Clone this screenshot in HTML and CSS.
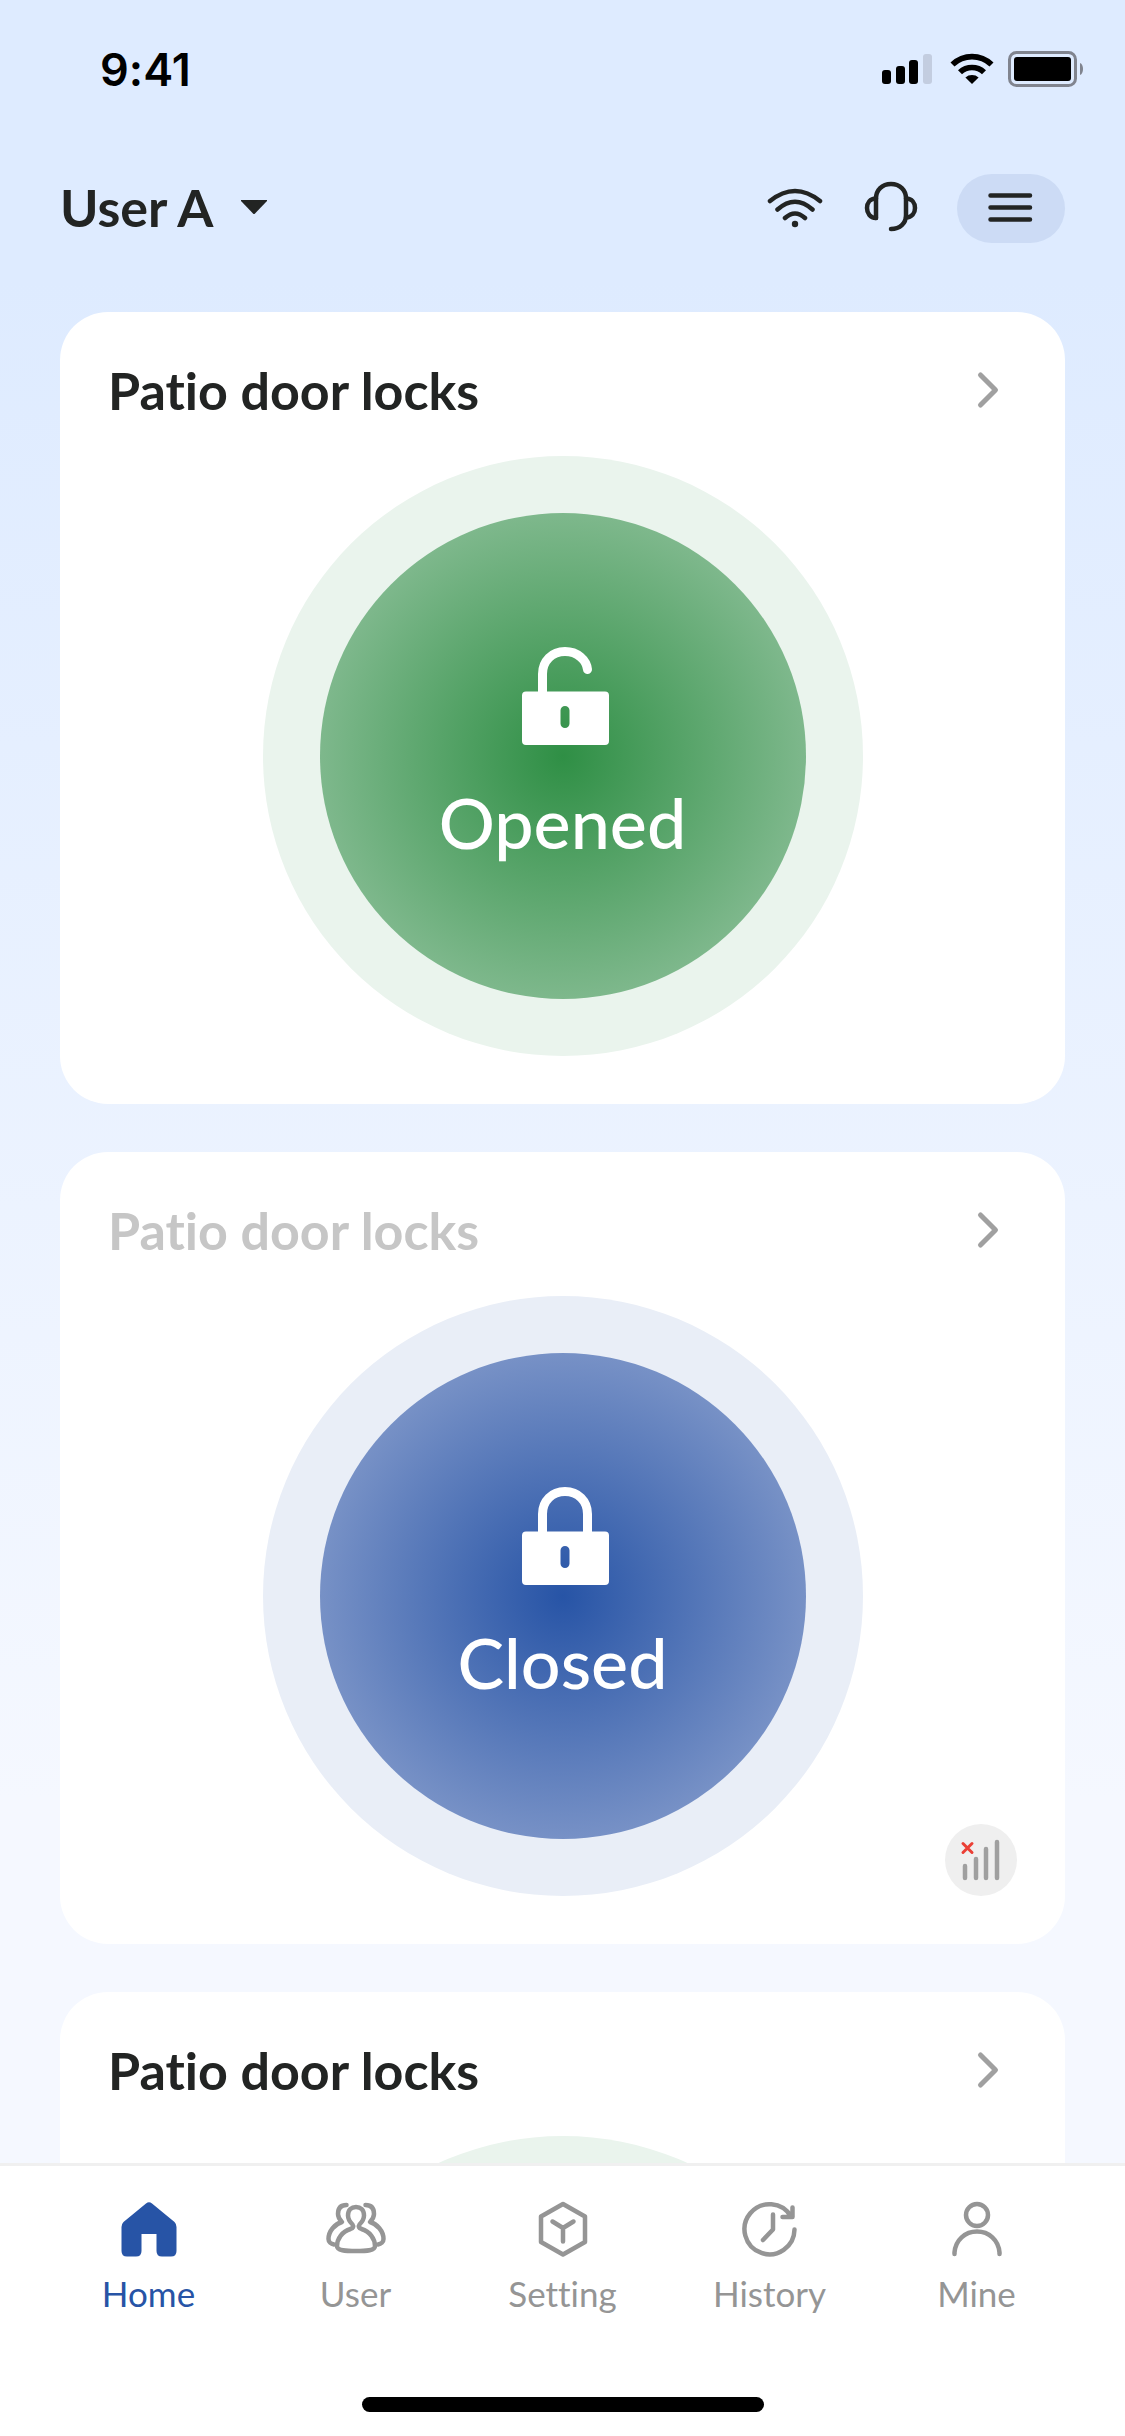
FILE: index.html
```html
<!DOCTYPE html>
<html lang="en">
<head>
  <meta charset="UTF-8">
  <meta name="viewport" content="width=device-width, initial-scale=1">
  <title>Door Locks</title>
  <link rel="stylesheet" href="styles.css">
</head>
<body>

  <div class="status-bar">
    <div class="time">9:41</div>
    <div class="status-icons">
      <svg width="54" height="36" viewBox="0 0 54 36">
        <rect x="0" y="19" width="9" height="14" rx="3"/>
        <rect x="14" y="15" width="9" height="18" rx="3"/>
        <rect x="27" y="9" width="9" height="24" rx="3"/>
        <rect x="41" y="3" width="9" height="30" rx="3" fill="#c3cde0"/>
      </svg>
      <svg width="44" height="36" viewBox="0 0 44 36">
        <path d="M0.5 11.5A31 31 0 0 1 43.5 11.5L39.5 15.5A25.5 25.5 0 0 0 4.5 15.5Z"/>
        <path d="M8 19.2A20.5 20.5 0 0 1 36 19.2L32 23.2A14.6 14.6 0 0 0 12 23.2Z"/>
        <path d="M15.4 26.6A10 10 0 0 1 28.6 26.6L22 33Z"/>
      </svg>
      <svg width="75" height="36" viewBox="0 0 75 36">
        <rect x="1.5" y="1.5" width="66" height="33" rx="7" fill="none" stroke="#80848f" stroke-width="3"/>
        <rect x="6" y="6" width="57" height="24" rx="3"/>
        <path d="M72 12C76 13 76 23 72 24Z" fill="#80848f"/>
      </svg>
    </div>
  </div>

  <header class="header">
    <button class="user-switch">
      User A
      <svg width="26" height="14" viewBox="0 0 26 14"><path d="M0 0H26V1L14 13.4Q13 14.4 12 13.4L0 1Z" fill="#222423"/></svg>
    </button>
    <div class="actions">
      <button class="icon-btn" aria-label="Wi-Fi">
        <svg width="60" height="60" viewBox="0 0 60 60" fill="none" stroke="#222423" stroke-width="4.5" stroke-linecap="round">
          <path d="M5 22Q30 2 55 22M12.5 30.5Q30 15 47.5 30.5M20 39Q30 30 40 39"/>
          <circle cx="30" cy="45" r="3.2" fill="#222423" stroke="none"/>
        </svg>
      </button>
      <button class="icon-btn" aria-label="Support">
        <svg width="60" height="60" viewBox="0 0 60 60" fill="none" stroke="#222423" stroke-width="4.5" stroke-linecap="round" stroke-linejoin="round">
          <path d="M15 39V19.5C15 11 21 5 30 5S45 11 45 19.5V36C45 44.5 39 50 30 50"/>
          <path d="M15 19.5C9 19.5 6 24 6 29S9 39 15 39M45 19.5C51 19.5 54 24 54 29S51 38.5 45 38.5"/>
        </svg>
      </button>
      <button class="menu-btn" aria-label="Menu">
        <svg width="60" height="60" viewBox="0 0 60 60" fill="none" stroke="#222423" stroke-width="4.5" stroke-linecap="round">
          <path d="M9.5 16.5H49M9.5 28.5H49M9.5 40.5H49"/>
        </svg>
      </button>
    </div>
  </header>

  <main class="locks">
    <section class="card">
      <div class="card-header">
        <h2>Patio door locks</h2>
        <a href="#" aria-label="Open details">
          <svg width="60" height="60" viewBox="0 0 60 60"><path d="M23.5 15L38.5 30L23.5 45"/></svg>
        </a>
      </div>
      <button class="dial opened">
        <span class="dial-inner">
          <svg width="93" height="99" viewBox="-6 0 93 99">
            <path d="M20.500 46V27C20.500 14 30 4.500 43 4.500C55.500 4.500 64.500 13 65.500 22.500" fill="none" stroke="#fff" stroke-width="9" stroke-linecap="round"/>
            <path fill="#fff" fill-rule="evenodd" d="M4 44.500H83Q87 44.500 87 48.500V94Q87 98 83 98H4Q0 98 0 94V48.500Q0 44.500 4 44.500ZM38.500 63.500V76.500A4.500 4.500 0 0 0 47.500 76.500V63.500A4.500 4.500 0 0 0 38.500 63.500Z"/>
          </svg>
          Opened
        </span>
      </button>
    </section>

    <section class="card offline">
      <div class="card-header">
        <h2>Patio door locks</h2>
        <a href="#" aria-label="Open details">
          <svg width="60" height="60" viewBox="0 0 60 60"><path d="M23.5 15L38.5 30L23.5 45"/></svg>
        </a>
      </div>
      <button class="dial closed">
        <span class="dial-inner">
          <svg width="93" height="99" viewBox="-6 0 93 99">
            <path d="M20.500 46V27C20.500 14 30 4.500 43 4.500S65.500 14 65.500 27V46" fill="none" stroke="#fff" stroke-width="9"/>
            <path fill="#fff" fill-rule="evenodd" d="M4 44.500H83Q87 44.500 87 48.500V94Q87 98 83 98H4Q0 98 0 94V48.500Q0 44.500 4 44.500ZM38.500 63.500V76.500A4.500 4.500 0 0 0 47.500 76.500V63.500A4.500 4.500 0 0 0 38.500 63.500Z"/>
          </svg>
          Closed
        </span>
      </button>
      <!-- no signal badge -->
      <div class="signal">
        <svg width="72" height="72" viewBox="0 0 72 72" fill="none" stroke="#a0a0a0" stroke-width="4.5" stroke-linecap="round">
          <path d="M20 42V54M31 35V54M41 25V54M52 18V54"/>
          <path d="M18 19.5L27 28.5M27 19.5L18 28.5" stroke="#eb4036" stroke-width="3"/>
        </svg>
      </div>
    </section>

    <section class="card">
      <div class="card-header">
        <h2>Patio door locks</h2>
        <a href="#" aria-label="Open details">
          <svg width="60" height="60" viewBox="0 0 60 60"><path d="M23.5 15L38.5 30L23.5 45"/></svg>
        </a>
      </div>
      <div class="dial opened"></div>
    </section>
  </main>

  <footer class="tab-bar">
    <nav class="tabs">
      <a href="#" class="tab active">
        <svg width="72" height="72" viewBox="0 0 72 72">
          <path d="M33 10.5Q36 8 39 10.5L61.5 29Q63.5 31 63.5 34V58Q63.5 63.5 58 63.5H49Q43.5 63.5 43.5 58V41H28.5V58Q28.5 63.5 23 63.5H14Q8.5 63.5 8.5 58V34Q8.5 31 10.5 29Z" fill="#2754a6"/>
        </svg>
        Home
      </a>
      <a href="#" class="tab">
        <svg width="72" height="72" viewBox="0 0 72 72">
          <path d="M32.5 31.5C29 28 28 26 28 22.5C28 17 31.5 14 36 14S44 17 44 22.5C44 26 43 28 39.5 31.5C38 33.5 39 35 41.5 36C50 38.5 55 46 55 53C55 57.5 47 58 36 58S17 57.5 17 53C17 46 22 38.5 30.5 36C33 35 34 33.5 32.5 31.5Z"/>
          <path d="M26.5 12C20 12 18 16 18 21C18 25 20 27 22 29C15 31 8.5 38 8.5 46C8.5 49 11 51 14 51.5M45.5 12C52 12 54 16 54 21C54 25 52 27 50 29C57 31 63.5 38 63.5 46C63.5 49 61 51 58 51.5"/>
        </svg>
        User
      </a>
      <a href="#" class="tab">
        <svg width="72" height="72" viewBox="0 0 72 72">
          <path d="M36 11L58 23.5V49L36 61.5L14 49V23.5ZM25.5 28.5L36 35L46.5 28.5M36 35V48.5"/>
        </svg>
        Setting
      </a>
      <a href="#" class="tab">
        <svg width="72" height="72" viewBox="0 0 72 72">
          <path d="M60.5 36.5A25 25 0 1 1 57 23.5M58.5 14.5V24H48.5M39 21.5V36.5L29 47"/>
        </svg>
        History
      </a>
      <a href="#" class="tab">
        <svg width="72" height="72" viewBox="0 0 72 72">
          <circle cx="36" cy="22" r="11"/>
          <path d="M13.5 61V59.500C14.5 47 24 38.5 36 38.5S57.5 47 58.500 59.500V61"/>
        </svg>
        Mine
      </a>
    </nav>
    <div class="home-indicator"></div>
  </footer>

</body>
</html>
```
FILE: styles.css
```css
* {
  box-sizing: border-box;
}

body {
  margin: 0;
  height: 100vh;
  display: flex;
  flex-direction: column;
  overflow: hidden;
  font-family: Lato, "Open Sans", sans-serif;
  font-variant-ligatures: none;
  color: #222423;
  background: linear-gradient(#deebff 280px, #f5f8ff 1800px);
}

button {
  font: inherit;
  font-variant-ligatures: none;
  color: inherit;
  background: none;
  border: none;
  padding: 0;
  cursor: pointer;
}

a {
  color: inherit;
  text-decoration: none;
}

svg {
  display: block;
}

.status-bar {
  display: flex;
  justify-content: space-between;
  align-items: center;
  height: 138px;
  padding: 0 42px 0 100px;
  flex-shrink: 0;
}

.time {
  font-family: Inter, sans-serif;
  font-size: 45px;
  font-weight: 600;
  color: #000;
}

.status-icons {
  display: flex;
  gap: 14px;
}

.header {
  display: flex;
  justify-content: space-between;
  align-items: center;
  height: 141px;
  padding: 0 60px;
  flex-shrink: 0;
}

.user-switch {
  display: flex;
  align-items: center;
  gap: 28px;
  padding-bottom: 4px;
  font-size: 52px;
  font-weight: 700;
}

.actions {
  display: flex;
  align-items: center;
  gap: 36px;
}

.menu-btn {
  display: flex;
  align-items: center;
  justify-content: center;
  width: 108px;
  height: 69px;
  border-radius: 36px;
  background: #ccdbf5;
}

.locks {
  flex: 1;
  min-height: 0;
  overflow: hidden;
  display: flex;
  flex-direction: column;
  gap: 48px;
  padding: 33px 60px 0;
}

.card {
  position: relative;
  flex-shrink: 0;
  display: flex;
  flex-direction: column;
  padding: 0 48px 48px;
  border-radius: 48px;
  background: #fff;
}

.card-header {
  display: flex;
  justify-content: space-between;
  align-items: center;
  height: 144px;
  padding-top: 12px;
}

.card-header h2 {
  margin: 0;
  font-size: 52px;
  font-weight: 700;
}

.card-header path {
  fill: none;
  stroke: #a0a0a0;
  stroke-width: 5;
  stroke-linecap: round;
  stroke-linejoin: round;
}

.offline h2 {
  color: #c6c6c6;
}

.dial {
  display: flex;
  align-items: center;
  justify-content: center;
  align-self: center;
  width: 600px;
  height: 600px;
  border-radius: 50%;
}

.dial-inner {
  display: flex;
  flex-direction: column;
  align-items: center;
  justify-content: center;
  gap: 32px;
  width: 486px;
  height: 486px;
  border-radius: 50%;
  font-size: 70px;
  font-weight: 500;
  line-height: 88px;
  color: #fff;
}

.opened {
  background: #eaf4ed;
}

.opened .dial-inner {
  background: radial-gradient(closest-side, #2f8f45, #7eb88c);
}

.closed {
  background: #e9eef7;
}

.closed .dial-inner {
  background: radial-gradient(closest-side, #2754a6, #7791c6);
}

.signal {
  position: absolute;
  right: 48px;
  bottom: 48px;
  border-radius: 50%;
  background: #efefef;
}

.tab-bar {
  flex-shrink: 0;
  padding: 27px 45px 24px;
  border-top: 3px solid #f0f0f0;
  background: #fff;
}

.tabs {
  display: flex;
}

.tab {
  flex: 1;
  display: flex;
  flex-direction: column;
  align-items: center;
  gap: 6px;
  font-size: 35px;
  line-height: 44px;
  color: #959595;
}

.tab svg {
  fill: none;
  stroke: #959595;
  stroke-width: 4.5;
  stroke-linecap: round;
  stroke-linejoin: round;
}

.tab.active {
  color: #2754a6;
}

.tab.active svg {
  stroke: none;
}

.home-indicator {
  width: 402px;
  height: 15px;
  margin: 82px auto 0;
  border-radius: 8px;
  background: #000;
}
```
